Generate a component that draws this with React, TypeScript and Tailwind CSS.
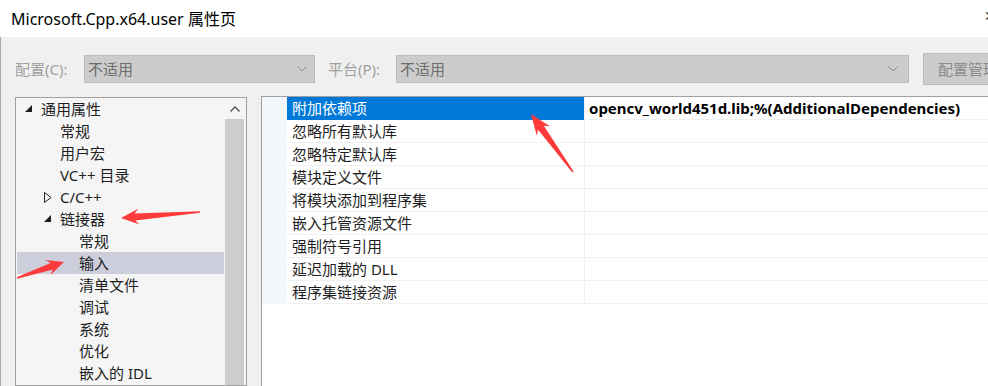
import React from 'react';

const FONT = '"Noto Sans", "Noto Sans CJK SC", sans-serif';

type TreeItem = { label: string; level: number; icon?: 'open' | 'closed'; selected?: boolean };

const tree: TreeItem[] = [
  { label: '通用属性', level: 0, icon: 'open' },
  { label: '常规', level: 1 },
  { label: '用户宏', level: 1 },
  { label: 'VC++ 目录', level: 1 },
  { label: 'C/C++', level: 1, icon: 'closed' },
  { label: '链接器', level: 1, icon: 'open' },
  { label: '常规', level: 2 },
  { label: '输入', level: 2, selected: true },
  { label: '清单文件', level: 2 },
  { label: '调试', level: 2 },
  { label: '系统', level: 2 },
  { label: '优化', level: 2 },
  { label: '嵌入的 IDL', level: 2 },
];

const props = [
  '附加依赖项',
  '忽略所有默认库',
  '忽略特定默认库',
  '模块定义文件',
  '将模块添加到程序集',
  '嵌入托管资源文件',
  '强制符号引用',
  '延迟加载的 DLL',
  '程序集链接资源',
];

const Chevron = () => (
  <svg width="10" height="6" viewBox="0 0 10 6" className="shrink-0">
    <polyline points="0.5,0.5 5,5 9.5,0.5" fill="none" stroke="#8a8a8a" strokeWidth="1" />
  </svg>
);

const Expander = ({ kind }: { kind: 'open' | 'closed' }) =>
  kind === 'open' ? (
    <svg width="8" height="8" viewBox="0 0 8 8">
      <polygon points="7,0 7,7 0,7" fill="#1e1e1e" />
    </svg>
  ) : (
    <svg width="8" height="11" viewBox="0 0 8 11">
      <polygon points="0.5,0.5 7,5.5 0.5,10.5" fill="none" stroke="#1e1e1e" strokeWidth="1" />
    </svg>
  );

function arrowPts(x1: number, y1: number, x2: number, y2: number, head: number, hw: number, nw: number) {
  const dx = x2 - x1;
  const dy = y2 - y1;
  const len = Math.hypot(dx, dy);
  const ux = dx / len;
  const uy = dy / len;
  const nx = -uy;
  const ny = ux;
  const bx = x2 - ux * head;
  const by = y2 - uy * head;
  const nk = 4;
  const p = [
    [x2, y2],
    [bx + nx * hw, by + ny * hw],
    [bx + ux * nk + nx * nw, by + uy * nk + ny * nw],
    [x1 + nx * 0.8, y1 + ny * 0.8],
    [x1 - nx * 0.8, y1 - ny * 0.8],
    [bx + ux * nk - nx * nw, by + uy * nk - ny * nw],
    [bx - nx * hw, by - ny * hw],
  ];
  return p.map(([a, b]) => `${a.toFixed(1)},${b.toFixed(1)}`).join(' ');
}

export default function App() {
  return (
    <div
      className="relative w-[988px] h-[386px] overflow-hidden flex flex-col bg-[#f0f0f0]"
      style={{ fontFamily: FONT }}
    >
      {/* title bar */}
      <div className="h-[37px] shrink-0 bg-white flex items-center pl-[11px] text-[16px] text-black">
        Microsoft.Cpp.x64.user 属性页
      </div>
      <span className="absolute left-[984px] top-[8px] text-[14px] leading-[16px] text-[#333]">✕</span>

      <div className="flex-1 flex flex-col border-l border-[#a8a8a8] min-h-0">
        {/* config / platform row */}
        <div className="h-[59px] shrink-0 flex items-start pl-[14px] text-[15px]">
          <span className="w-[69px] shrink-0 mt-[22px] leading-[20px] text-[#a0a0a0]">配置(C):</span>
          <div className="w-[231px] shrink-0 h-[28px] mt-[18px] bg-[#cccccc] border border-[#bcbcbc] flex items-center pl-[3px] pr-[7px]">
            <span className="flex-1 text-[#6d6d6d]">不适用</span>
            <Chevron />
          </div>
          <span className="ml-[13px] w-[68px] shrink-0 mt-[22px] leading-[20px] text-[#a0a0a0]">平台(P):</span>
          <div className="w-[513px] shrink-0 h-[28px] mt-[18px] bg-[#cccccc] border border-[#bcbcbc] flex items-center pl-[3px] pr-[10px]">
            <span className="flex-1 text-[#6d6d6d]">不适用</span>
            <Chevron />
          </div>
          <div className="ml-[14px] w-[100px] shrink-0 h-[32px] mt-[16px] bg-[#cccccc] border border-[#bcbcbc] flex items-center pl-[14px] whitespace-nowrap text-[#8a8a8a]">
            配置管理器(O)...
          </div>
        </div>

        {/* panels */}
        <div className="flex-1 flex pl-[14px] min-h-0">
          {/* tree */}
          <div className="w-[232px] shrink-0 mt-[1px] border border-[#a0a0a0] bg-[#f5f5f5] flex">
            <div className="flex-1 p-[1px] pt-0 text-[15px] text-[#1e1e1e]">
              {tree.map((t, i) => (
                <div
                  key={i}
                  className={`h-[22px] flex items-center ${t.selected ? 'bg-[#cccedb]' : ''}`}
                  style={{ paddingLeft: 8 + t.level * 19 }}
                >
                  <span className="w-[16px] flex items-center">{t.icon && <Expander kind={t.icon} />}</span>
                  <span className="whitespace-nowrap">{t.label}</span>
                </div>
              ))}
            </div>
            <div className="w-[19px] mr-[2px] flex flex-col">
              <div className="h-[21px] flex items-center justify-center">
                <svg width="10" height="6" viewBox="0 0 10 6">
                  <polyline points="0.5,5.5 5,1 9.5,5.5" fill="none" stroke="#505050" strokeWidth="1.4" />
                </svg>
              </div>
              <div className="flex-1 bg-[#cdcdcd]" />
            </div>
          </div>

          {/* property grid */}
          <div className="flex-1 ml-[14px] border-t border-l border-[#a0a0a0] bg-white flex items-start">
            <div className="w-[25px] h-[207px] bg-[#f3f6fb]" />
            <div className="flex-1 text-[15px]">
              {props.map((p, i) => (
                <div key={i} className="h-[23px] flex">
                  <div
                    className={`w-[297px] shrink-0 pl-[5px] flex items-center whitespace-nowrap ${
                      i === 0 ? 'bg-[#0078d7] text-white' : 'text-[#1e1e1e] border-b border-[#f0f0f0]'
                    }`}
                  >
                    {p}
                  </div>
                  <div className="flex-1 border-l border-b border-[#f0f0f0] pl-[4px] flex items-center whitespace-nowrap font-bold text-black">
                    {i === 0 ? 'opencv_world451d.lib;%(AdditionalDependencies)' : ''}
                  </div>
                </div>
              ))}
            </div>
          </div>
        </div>
      </div>

      {/* red annotation arrows */}
      <svg className="absolute inset-0 pointer-events-none" width="988" height="386">
        <polygon points={arrowPts(200, 212, 121, 218, 18, 8, 3.5)} fill="#ff3a3a" />
        <polygon points={arrowPts(17, 278, 64, 262, 17, 8, 3.5)} fill="#ff3a3a" />
        <polygon points={arrowPts(573, 172, 531, 114, 21, 8, 3.5)} fill="#ff3a3a" />
      </svg>
    </div>
  );
}
